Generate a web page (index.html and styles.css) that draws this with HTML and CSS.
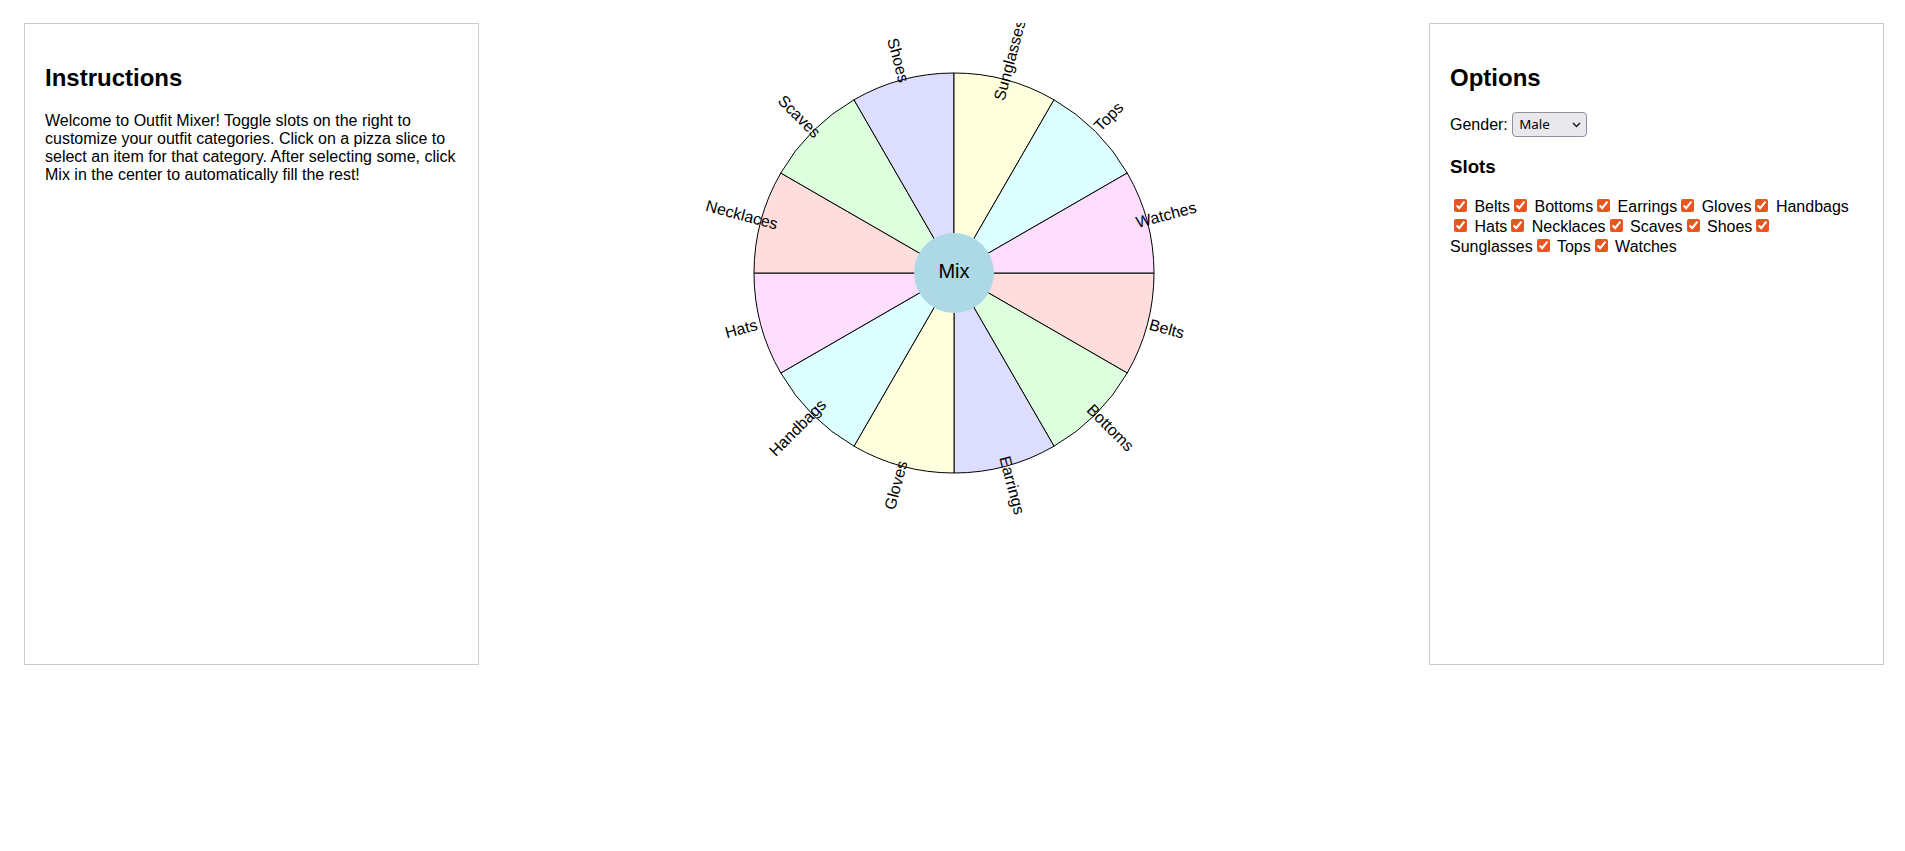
FILE: index.html
```html
<!DOCTYPE html>
<html>
<head>
    <title>Outfit Mixer</title>
    <link rel="stylesheet" href="styles.css">
</head>
<body>
    <div class="layout">
        <div class="panel">
            <h2>Instructions</h2>
            <p>Welcome to Outfit Mixer! Toggle slots on the right to customize your outfit categories. Click on a pizza slice to select an item for that category. After selecting some, click Mix in the center to automatically fill the rest!</p>
        </div>
        <div class="wheel-area">
            <svg class="wheel" width="500" height="500" viewBox="0 0 500 500">
                <g class="slices">
                    <path class="c1" d="M250,250 L450,250 A200,200 0 0,1 423.205,350 Z"/>
                    <path class="c2" d="M250,250 L423.205,350 A200,200 0 0,1 350,423.205 Z"/>
                    <path class="c3" d="M250,250 L350,423.205 A200,200 0 0,1 250,450 Z"/>
                    <path class="c4" d="M250,250 L250,450 A200,200 0 0,1 150,423.205 Z"/>
                    <path class="c5" d="M250,250 L150,423.205 A200,200 0 0,1 76.795,350 Z"/>
                    <path class="c6" d="M250,250 L76.795,350 A200,200 0 0,1 50,250 Z"/>
                    <path class="c1" d="M250,250 L50,250 A200,200 0 0,1 76.795,150 Z"/>
                    <path class="c2" d="M250,250 L76.795,150 A200,200 0 0,1 150,76.795 Z"/>
                    <path class="c3" d="M250,250 L150,76.795 A200,200 0 0,1 250,50 Z"/>
                    <path class="c4" d="M250,250 L250,50 A200,200 0 0,1 350,76.795 Z"/>
                    <path class="c5" d="M250,250 L350,76.795 A200,200 0 0,1 423.205,150 Z"/>
                    <path class="c6" d="M250,250 L423.205,150 A200,200 0 0,1 450,250 Z"/>
                </g>
                <g class="labels">
                    <text transform="translate(462.50,306.94) rotate(15)">Belts</text>
                    <text transform="translate(405.56,405.56) rotate(45)">Bottoms</text>
                    <text transform="translate(306.94,462.50) rotate(75)">Earrings</text>
                    <text transform="translate(193.06,462.50) rotate(-75)">Gloves</text>
                    <text transform="translate(94.44,405.56) rotate(-45)">Handbags</text>
                    <text transform="translate(37.50,306.94) rotate(-15)">Hats</text>
                    <text transform="translate(37.50,193.06) rotate(15)">Necklaces</text>
                    <text transform="translate(94.44,94.44) rotate(45)">Scaves</text>
                    <text transform="translate(193.06,37.50) rotate(75)">Shoes</text>
                    <text transform="translate(306.94,37.50) rotate(-75)">Sunglasses</text>
                    <text transform="translate(405.56,94.44) rotate(-45)">Tops</text>
                    <text transform="translate(462.50,193.06) rotate(-15)">Watches</text>
                </g>
                <g class="mix">
                    <circle cx="250" cy="250" r="40"/>
                    <text x="250" y="250">Mix</text>
                </g>
            </svg>
        </div>
        <div class="panel">
            <h2>Options</h2>
            <div>
                <label for="gender">Gender:</label>
                <span class="select-wrap">
                    <select id="gender">
                        <option>Male</option>
                        <option>Female</option>
                    </select>
                    <svg class="chevron" width="9" height="6" viewBox="0 0 9 6"><path d="M1,1 L4.5,4.5 L8,1" fill="none" stroke="#1b1b1f" stroke-width="1.5"/></svg>
                </span>
            </div>
            <h3>Slots</h3>
            <div id="slots"><span><input type="checkbox" checked> Belts</span><span><input type="checkbox" checked> Bottoms</span><span><input type="checkbox" checked> Earrings</span><span><input type="checkbox" checked> Gloves</span><span><input type="checkbox" checked> Handbags</span><span><input type="checkbox" checked> Hats</span><span><input type="checkbox" checked> Necklaces</span><span><input type="checkbox" checked> Scaves</span><span><input type="checkbox" checked> Shoes</span><span><input type="checkbox" checked> Sunglasses</span><span><input type="checkbox" checked> Tops</span><span><input type="checkbox" checked> Watches</span></div>
        </div>
    </div>
</body>
</html>
```

FILE: styles.css
```css
body {
    font-family: "Liberation Sans", Arial, sans-serif;
    margin: 0;
    color: #000;
    background-color: #fff;
}
.layout {
    display: flex;
    align-items: flex-start;
    padding: 23px 21px 0 24px;
}
.panel {
    width: 413px;
    height: 600px;
    padding: 20px;
    border: 1px solid #ccc;
    flex: none;
}
.wheel-area {
    flex: 1;
    display: flex;
    justify-content: center;
}
.wheel {
    display: block;
}
.slices path {
    stroke: #000;
    stroke-width: 1;
}
.c1 { fill: #ffdddd; }
.c2 { fill: #ddffdd; }
.c3 { fill: #ddddff; }
.c4 { fill: #ffffdd; }
.c5 { fill: #ddffff; }
.c6 { fill: #ffddff; }
.labels text {
    font-size: 16px;
    text-anchor: middle;
    dominant-baseline: middle;
}
.mix circle {
    fill: lightblue;
}
.mix text {
    font-size: 20px;
    text-anchor: middle;
    dominant-baseline: middle;
}
.select-wrap {
    position: relative;
    display: inline-block;
}
.select-wrap select {
    appearance: none;
    -webkit-appearance: none;
    width: 75px;
    height: 25px;
    margin: 0;
    padding: 0 20px 0 6px;
    background-color: #e9e9ed;
    color: #000;
    border: 1px solid #8f8f9d;
    border-radius: 4px;
    font-family: "Noto Sans", sans-serif;
    font-size: 13.33px;
}
.chevron {
    position: absolute;
    right: 6px;
    top: 10px;
    pointer-events: none;
}
#slots {
    margin-right: 7px;
}
#slots input {
    accent-color: #e95420;
}
```
